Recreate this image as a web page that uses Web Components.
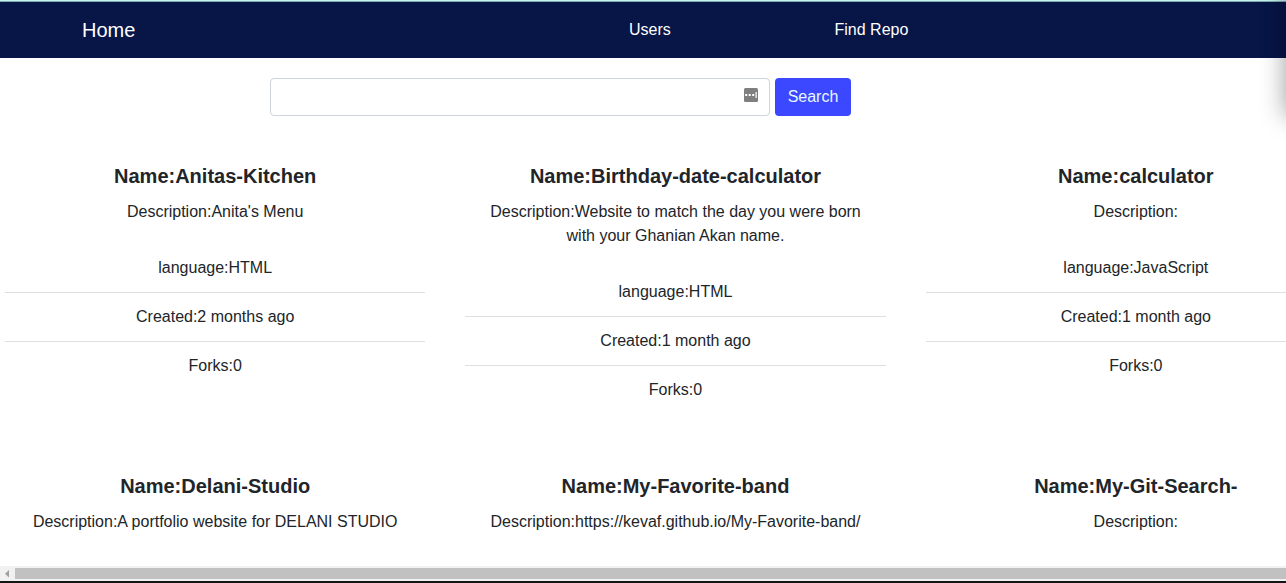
<!DOCTYPE html>
<html lang="en">
<head>
<meta charset="utf-8">
<title>Find Repo</title>
<style>
html,body{margin:0;height:100%;overflow:hidden}
body{font:16px/24px "Liberation Sans",Arial,sans-serif;color:#212529;background:#fff}
</style>
</head>
<body>
<repo-app></repo-app>
<script>
const define = (name, html) => customElements.define(name, class extends HTMLElement {
  constructor() {
    super();
    const t = document.createElement('template');
    t.innerHTML = html;
    this.attachShadow({mode: 'open'}).append(t.content.cloneNode(true));
  }
});

define('nav-bar', `<style>
:host{display:grid;grid-template-columns:82px 547px 205.5px 1fr;align-items:center;height:56px;flex:none;background:#071547;color:#fff;box-sizing:border-box}
.brand{grid-column:2;font-size:20px;line-height:30px}
</style><span class="brand"><slot name="brand"></slot></span><slot></slot>`);

define('search-form', `<style>
:host{display:flex;gap:5px;margin:20px 0 0 270px;height:38px;flex:none}
.field{box-sizing:border-box;width:500px;border:1px solid #ced4da;border-radius:4px;display:flex;justify-content:flex-end;align-items:flex-start;padding:9px 11px 0 0}
button{font:inherit;color:#e6f8ff;background:#3b48ff;border:0;border-radius:4px;padding:0;width:76px}
svg{display:block}
</style><div class="field"><svg width="14" height="14" viewBox="0 0 14 14"><rect width="14" height="14" rx="1.5" fill="#7f7f7f"/><g fill="#fff"><rect x="1.2" y="6" width="2" height="2"/><rect x="4.7" y="6" width="2" height="2"/><rect x="8.2" y="6" width="2" height="2"/><rect x="11.5" y="4" width="1.2" height="6"/></g></svg></div><button><slot></slot></button>`);

define('repo-card', `<style>
:host{display:block;text-align:center}
.body{padding:20px}
h5{margin:0 0 12px;font-size:20px;line-height:24px;font-weight:700}
p{margin:0}
::slotted([slot="language"]),::slotted([slot="created"]),::slotted([slot="forks"]){display:block;padding:12px 20px}
::slotted([slot="created"]),::slotted([slot="forks"]){border-top:1px solid #dfdfdf}
</style><div class="body"><h5><slot name="name"></slot></h5><p><slot name="description"></slot></p></div>
<slot name="language"></slot><slot name="created"></slot><slot name="forks"></slot>`);

define('scroll-bar', `<style>
:host{display:flex;height:15px;flex:none;background:#f1f1f1;border-bottom:2px solid #151518;align-items:center}
svg{flex:none;display:block}
.thumb{flex:1;height:11px;background:#c1c1c1}
</style><svg width="15" height="15" viewBox="0 0 15 15"><path d="M9 4v7.4L5 7.7z" fill="#a0a0a0"/></svg><div class="thumb"></div>`);

const card = (name, description, language, created) => `<repo-card><span slot="name">Name:${name}</span><span slot="description">Description:${description}</span>${language ? `<span slot="language">language:${language}</span><span slot="created">Created:${created}</span><span slot="forks">Forks:0</span>` : ''}</repo-card>`;

define('repo-app', `<style>
:host{display:flex;flex-direction:column;height:583px;position:relative;overflow:hidden}
.edge{height:2px;flex:none;background:linear-gradient(#c5f2f1 50%,#7eabac 50%)}
.grid{display:grid;grid-template-columns:repeat(3,420.33px);grid-template-rows:270px auto;align-content:start;gap:40px;margin:28px 0 0 5px;flex:1;min-height:0}
.shade{position:absolute;left:100%;top:-20px;width:50px;height:136px;box-shadow:0 0 26px rgba(0,0,0,.4)}
</style>
<div class="edge"></div>
<nav-bar><span slot="brand">Home</span><span>Users</span><span>Find Repo</span></nav-bar>
<search-form>Search</search-form>
<div class="grid">
${card('Anitas-Kitchen', "Anita's Menu", 'HTML', '2 months ago')}
${card('Birthday-date-calculator', 'Website to match the day you were born with your Ghanian Akan name.', 'HTML', '1 month ago')}
${card('calculator', '', 'JavaScript', '1 month ago')}
${card('Delani-Studio', 'A portfolio website for DELANI STUDIO')}
${card('My-Favorite-band', 'https://kevaf.github.io/My-Favorite-band/')}
${card('My-Git-Search-', '')}
</div>
<scroll-bar></scroll-bar>
<div class="shade"></div>`);
</script>
</body>
</html>
